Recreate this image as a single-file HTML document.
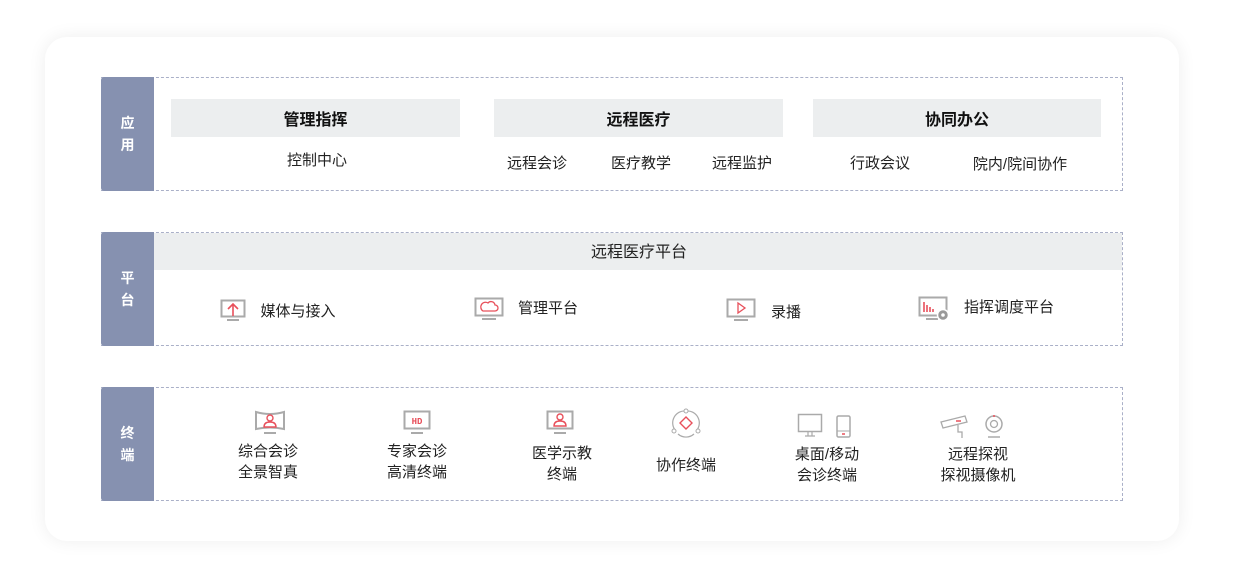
<!DOCTYPE html>
<html><head><meta charset="utf-8"><style>
*{margin:0;padding:0;box-sizing:border-box}
body{width:1250px;height:574px;background:#fff;font-family:"Liberation Sans","Noto Sans CJK SC",sans-serif;position:relative;overflow:hidden;color:#222}
.card{position:absolute;left:45px;top:37px;width:1134px;height:504px;background:#fff;border-radius:22px;box-shadow:0 0 18px rgba(0,0,0,0.07)}
.row{position:absolute;left:101px;width:1022px;height:114px;border:1px dashed #aab0c8;border-left:none}
.lab{position:absolute;left:101px;width:53px;height:114px;background:#8691b0;border-radius:3px 0 0 3px;color:#fff;font-weight:bold;font-size:14px;display:flex;flex-direction:column;align-items:center;justify-content:center;line-height:22px}
.t{position:absolute;font-size:15px;color:#222;white-space:nowrap;transform:translateX(-50%);text-align:center;line-height:21px}
.hb{position:absolute;background:#eceeef;height:38px;top:99px;font-weight:bold;font-size:16px;color:#111;display:flex;align-items:center;justify-content:center}
svg{position:absolute}
</style></head><body>
<div class="card"></div>

<div class="row" style="top:77px"></div>
<div class="lab" style="top:77px"><span>应</span><span>用</span></div>
<div class="hb" style="left:171px;width:289px">管理指挥</div>
<div class="hb" style="left:494px;width:289px">远程医疗</div>
<div class="hb" style="left:813px;width:288px">协同办公</div>
<div class="t" style="left:317px;top:150px">控制中心</div>
<div class="t" style="left:537px;top:153px">远程会诊</div>
<div class="t" style="left:641px;top:153px">医疗教学</div>
<div class="t" style="left:742px;top:153px">远程监护</div>
<div class="t" style="left:880px;top:153px">行政会议</div>
<div class="t" style="left:1020px;top:154px">院内/院间协作</div>

<div class="row" style="top:232px"></div>
<div class="lab" style="top:232px"><span>平</span><span>台</span></div>
<div style="position:absolute;left:154px;top:233px;width:968px;height:37px;background:#eceeef"></div>
<div class="t" style="left:639px;top:242px;font-size:16px">远程医疗平台</div>

<svg style="left:220px;top:299px" width="26" height="24" viewBox="0 0 26 24"><rect x="1.5" y="1.5" width="23" height="16" fill="none" stroke="#aaa" stroke-width="2"/><rect x="7" y="20" width="12" height="2" fill="#aaa"/><path d="M13 17V6M8 10l5-5 5 5" fill="none" stroke="#e8505b" stroke-width="1.6"/></svg>
<div class="t" style="left:298px;top:301px">媒体与接入</div>
<svg style="left:474px;top:297px" width="30" height="25" viewBox="0 0 30 25"><rect x="1.5" y="1.5" width="27" height="17" fill="none" stroke="#aaa" stroke-width="2"/><rect x="8" y="21" width="14" height="2" fill="#aaa"/><path d="M9 14h12a3 3 0 0 0 0-6 4 4 0 0 0-7-2 3 3 0 0 0-5 8z" fill="none" stroke="#e8505b" stroke-width="1.3"/></svg>
<div class="t" style="left:548px;top:298px">管理平台</div>
<svg style="left:726px;top:298px" width="30" height="25" viewBox="0 0 30 25"><rect x="1.5" y="1.5" width="27" height="17" fill="none" stroke="#aaa" stroke-width="2"/><rect x="8" y="21" width="14" height="2" fill="#aaa"/><path d="M12 5v10l7-5z" fill="none" stroke="#e8505b" stroke-width="1.3"/></svg>
<div class="t" style="left:786px;top:302px">录播</div>
<svg style="left:918px;top:296px" width="32" height="26" viewBox="0 0 32 26"><rect x="1.5" y="1.5" width="27" height="18" fill="none" stroke="#aaa" stroke-width="2"/><rect x="8" y="22" width="12" height="2" fill="#aaa"/><path d="M6 6v10M9 9v7M12 11v5M15 13v3" stroke="#e8505b" stroke-width="1.6"/><circle cx="25" cy="19" r="5.5" fill="#999" stroke="#fff" stroke-width="1.5"/><circle cx="25" cy="19" r="1.8" fill="#fff"/></svg>
<div class="t" style="left:1009px;top:297px">指挥调度平台</div>

<div class="row" style="top:387px"></div>
<div class="lab" style="top:387px"><span>终</span><span>端</span></div>

<svg style="left:254px;top:410px" width="32" height="26" viewBox="0 0 32 26"><path d="M2 2q14 4 28 0v17q-14-3-28 0z" fill="none" stroke="#aaa" stroke-width="2"/><rect x="10" y="22" width="12" height="2" fill="#aaa"/><circle cx="16" cy="8" r="3" fill="none" stroke="#e8505b" stroke-width="1.4"/><path d="M10 17q0-5 6-5t6 5z" fill="none" stroke="#e8505b" stroke-width="1.4"/></svg>
<div class="t" style="left:268px;top:441px">综合会诊<br>全景智真</div>
<svg style="left:403px;top:410px" width="28" height="26" viewBox="0 0 28 26"><rect x="1.5" y="1.5" width="25" height="17" fill="none" stroke="#aaa" stroke-width="2"/><rect x="8" y="22" width="12" height="2" fill="#aaa"/><text x="14" y="14" font-size="9" font-weight="bold" fill="#e8505b" text-anchor="middle" font-family="Liberation Mono">HD</text></svg>
<div class="t" style="left:417px;top:441px">专家会诊<br>高清终端</div>
<svg style="left:546px;top:410px" width="28" height="26" viewBox="0 0 28 26"><rect x="1.5" y="1.5" width="25" height="17" fill="none" stroke="#aaa" stroke-width="2"/><rect x="8" y="22" width="12" height="2" fill="#aaa"/><circle cx="14" cy="7" r="3" fill="none" stroke="#e8505b" stroke-width="1.4"/><path d="M8 16q0-5 6-5t6 5z" fill="none" stroke="#e8505b" stroke-width="1.4"/></svg>
<div class="t" style="left:562px;top:443px">医学示教<br>终端</div>
<svg style="left:670px;top:408px" width="32" height="30" viewBox="0 0 32 30"><path d="M5 22A12 12 0 0 1 16 3M27 22A12 12 0 0 0 16 3M8 26A12 12 0 0 0 24 26" fill="none" stroke="#aaa" stroke-width="1.2"/><circle cx="16" cy="3" r="2" fill="#fff" stroke="#aaa"/><circle cx="4" cy="23" r="2" fill="#fff" stroke="#aaa"/><circle cx="28" cy="23" r="2" fill="#fff" stroke="#aaa"/><path d="M10 15l6-6 6 6-6 6z" fill="none" stroke="#e8505b" stroke-width="1.4"/></svg>
<div class="t" style="left:686px;top:455px">协作终端</div>
<svg style="left:797px;top:413px" width="58" height="26" viewBox="0 0 58 26"><rect x="1.5" y="1.5" width="23" height="17" fill="none" stroke="#aaa" stroke-width="1.5"/><path d="M11 19v4M15 19v4M8 23h10" stroke="#aaa" stroke-width="1.2"/><rect x="40" y="3" width="13" height="21" rx="1.5" fill="none" stroke="#aaa" stroke-width="1.5"/><path d="M40 18h13" stroke="#aaa"/><path d="M45 21h3" stroke="#e8505b" stroke-width="1.5"/></svg>
<div class="t" style="left:827px;top:444px">桌面/移动<br>会诊终端</div>
<svg style="left:938px;top:412px" width="72" height="28" viewBox="0 0 72 28"><path d="M3 10l24-6 2 6-24 6z" fill="none" stroke="#aaa" stroke-width="1.3"/><path d="M20 13v7h4v6" fill="none" stroke="#aaa" stroke-width="1.3"/><path d="M18 9h5" stroke="#e8505b" stroke-width="1.5"/><circle cx="56" cy="12" r="8" fill="none" stroke="#aaa" stroke-width="1.5"/><circle cx="56" cy="12" r="3.5" fill="none" stroke="#aaa" stroke-width="1.3"/><circle cx="56" cy="4" r="1" fill="#e8505b"/><path d="M50 25h12" stroke="#aaa" stroke-width="1.5"/></svg>
<div class="t" style="left:978px;top:444px">远程探视<br>探视摄像机</div>
</body></html>
